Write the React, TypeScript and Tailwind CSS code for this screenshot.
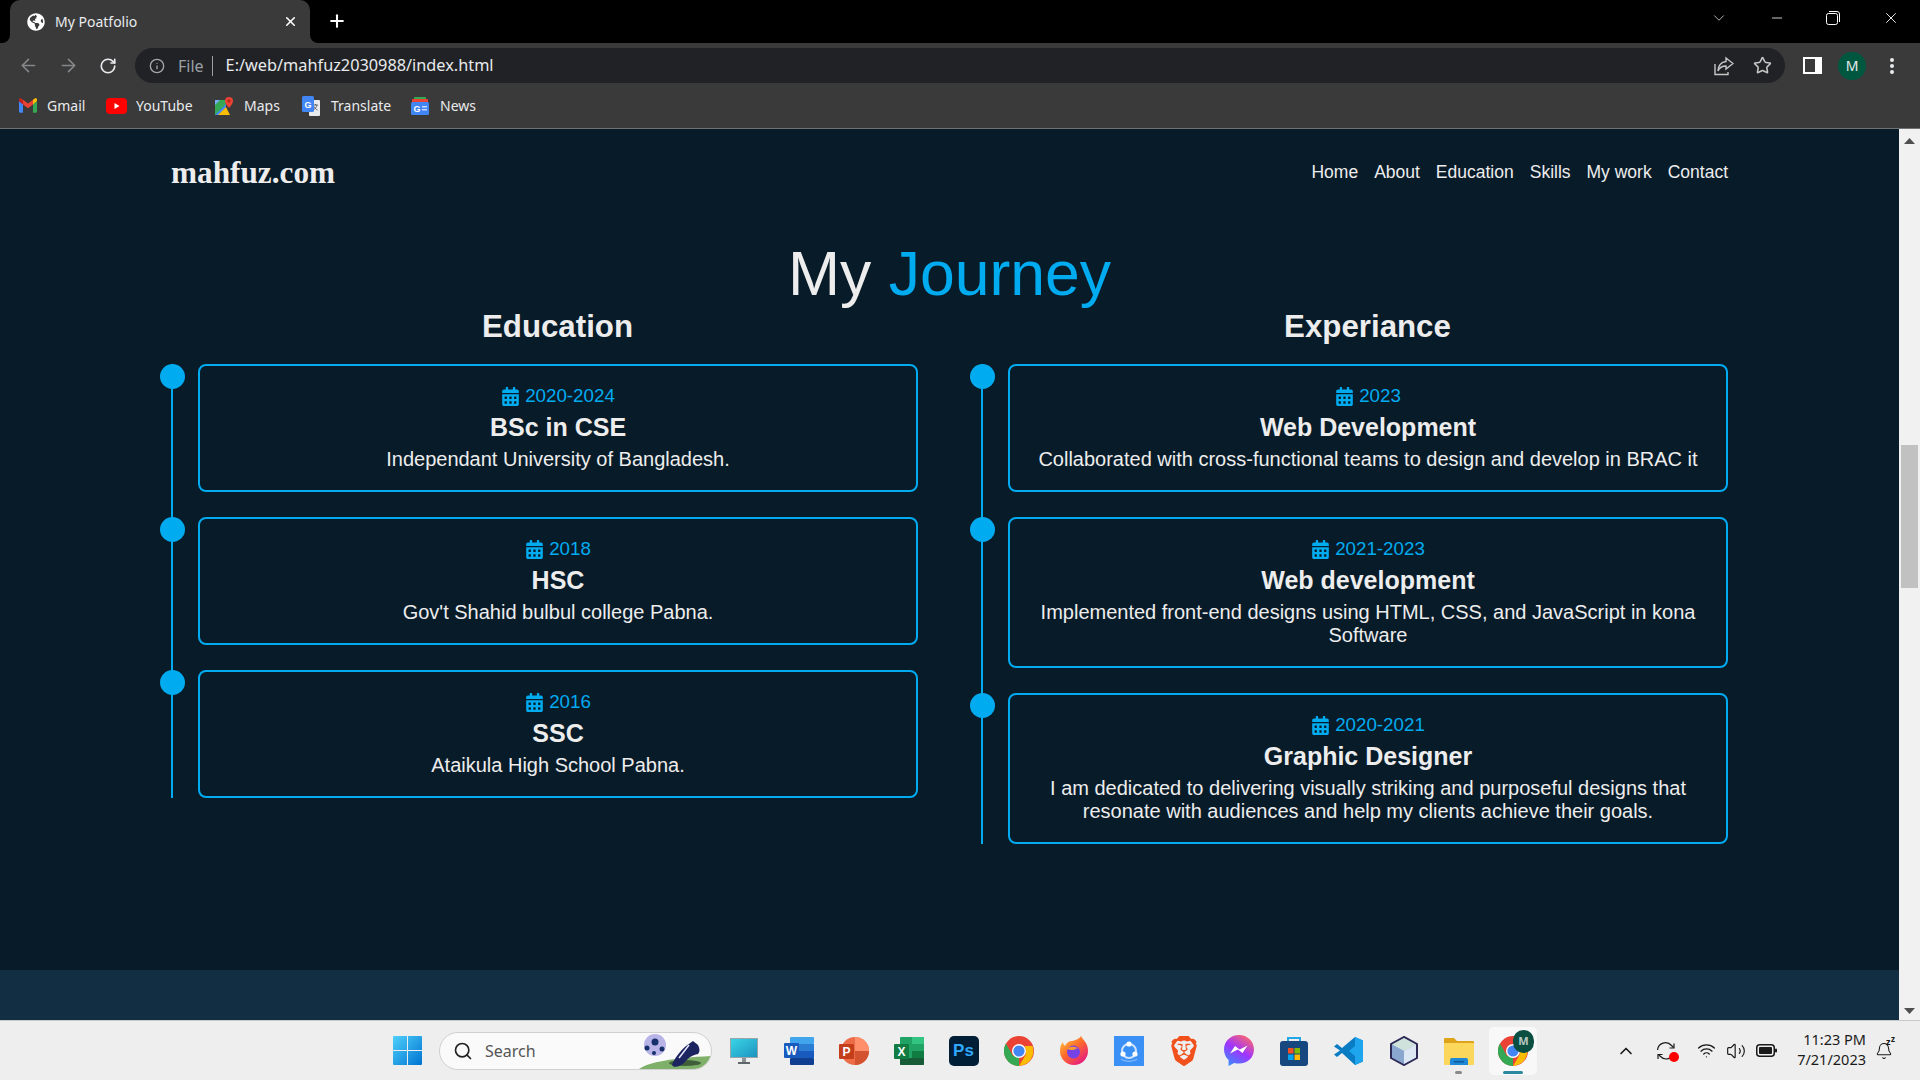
import type { ReactNode } from 'react';
import { ArrowLeft, ArrowRight, Bell, ChevronDown, ChevronUp, Info, Minus, Plus, RotateCw, Search, Star, Volume2, Wifi, X } from 'lucide-react';
import { FaCalendarAlt, FaGlobeAmericas } from 'react-icons/fa';
import { SiBrave } from 'react-icons/si';

type TimelineItem = { date: string; title: string; text: string };

const education: TimelineItem[] = [
  { date: '2020-2024', title: 'BSc in CSE', text: 'Independant University of Bangladesh.' },
  { date: '2018', title: 'HSC', text: "Gov't Shahid bulbul college Pabna." },
  { date: '2016', title: 'SSC', text: 'Ataikula High School Pabna.' },
];

const experience: TimelineItem[] = [
  { date: '2023', title: 'Web Development', text: 'Collaborated with cross-functional teams to design and develop in BRAC it' },
  { date: '2021-2023', title: 'Web development', text: 'Implemented front-end designs using HTML, CSS, and JavaScript in kona Software' },
  { date: '2020-2021', title: 'Graphic Designer', text: 'I am dedicated to delivering visually striking and purposeful designs that resonate with audiences and help my clients achieve their goals.' },
];

const navLinks = ['Home', 'About', 'Education', 'Skills', 'My work', 'Contact'];

function GmailIcon() {
  return (
    <svg width="18" height="15" viewBox="0 0 18 15">
      <path d="M0 3v10.500a1.300 1.300 0 0 0 1.300 1.300H4V6.500z" fill="#4285f4" />
      <path d="M14 6.500v8.300h2.700a1.300 1.300 0 0 0 1.300-1.300V3z" fill="#34a853" />
      <path d="M4 6.500 9 10.200l5-3.700V1.800L9 5.500 4 1.800z" fill="#ea4335" />
      <path d="M0 3l4 3.500V1.800L2.300.4A1.400 1.400 0 0 0 0 1.500z" fill="#c5221f" />
      <path d="M14 1.800v4.700L18 3V1.500A1.400 1.400 0 0 0 15.700.4z" fill="#fbbc04" />
    </svg>
  );
}

function YoutubeIcon() {
  return (
    <svg width="21" height="16" viewBox="0 0 21 16">
      <rect width="21" height="16" rx="4" fill="#f00" />
      <path d="M8.500 5v6l5-3z" fill="#fff" />
    </svg>
  );
}

function MapsIcon() {
  return (
    <svg width="18" height="18" viewBox="0 0 18 18">
      <path d="M0 3h11v15H0z" fill="#34a853" />
      <path d="M0 18 11 7v11z" fill="#4285f4" />
      <path d="M0 3h5L0 8z" fill="#7baaf7" />
      <path d="M3 18l8-8 4 8z" fill="#fbbc04" />
      <path d="M14 0a4 4 0 0 0-4 4c0 3 4 7 4 7s4-4 4-7a4 4 0 0 0-4-4z" fill="#ea4335" />
      <circle cx="14" cy="4" r="1.400" fill="#a52714" />
    </svg>
  );
}

function TranslateIcon() {
  return (
    <svg width="18" height="20" viewBox="0 0 18 20">
      <rect x="7" y="4" width="11" height="16" rx="1" fill="#e8eaed" />
      <path d="M11 9h5M13.500 8v1M15 9c-.5 2-2 4-3.500 5M12 10.500c.8 1.500 2 3 3.500 3.500" stroke="#5f6368" strokeWidth="1" fill="none" />
      <rect width="12" height="16" rx="1.500" fill="#4285f4" />
      <text x="6" y="11.500" textAnchor="middle" fontSize="9" fontWeight="700" fill="#fff" fontFamily="Liberation Sans">G</text>
    </svg>
  );
}

function NewsIcon() {
  return (
    <svg width="18" height="18" viewBox="0 0 18 18">
      <rect x="3" y="0" width="12" height="6" rx="1" fill="#34a853" />
      <rect x="1" y="2" width="16" height="5" rx="1" fill="#ea4335" />
      <rect x="0" y="5" width="18" height="13" rx="1.500" fill="#4285f4" />
      <text x="6" y="15" textAnchor="middle" fontSize="9" fontWeight="700" fill="#fff" fontFamily="Liberation Sans">G</text>
      <path d="M11 9h5v1.500h-5zM11 12h5v1.500h-5z" fill="#c6dafc" />
    </svg>
  );
}

function ChromeLogo() {
  return (
    <svg width="30" height="30" viewBox="0 0 30 30">
      <circle cx="15" cy="15" r="15" fill="#ea4335" />
      <path d="M15 30a15 15 0 0 1-13-22.500L9 20l6 0z" fill="#34a853" />
      <path d="M15 30 22 18l-1-8h7.500A15 15 0 0 1 15 30z" fill="#fbbc04" />
      <circle cx="15" cy="15" r="7" fill="#fff" />
      <circle cx="15" cy="15" r="5.600" fill="#4285f4" />
    </svg>
  );
}

function MonitorIcon() {
  return (
    <svg width="28" height="28" viewBox="0 0 28 28">
      <defs>
        <linearGradient id="mon" x1="0" y1="0" x2="1" y2="1">
          <stop offset="0" stopColor="#3ad5e6" />
          <stop offset="1" stopColor="#1c93c0" />
        </linearGradient>
      </defs>
      <rect x="0" y="1" width="28" height="20" fill="#9aa4ab" />
      <rect x="1" y="2" width="26" height="18" fill="url(#mon)" />
      <rect x="12" y="21" width="4" height="4" fill="#8a9298" />
      <rect x="8" y="25" width="12" height="2" fill="#5f666b" />
    </svg>
  );
}

function WordIcon() {
  return (
    <svg width="30" height="30" viewBox="0 0 30 30">
      <rect x="6" y="1" width="24" height="7" rx="1" fill="#41a5ee" />
      <rect x="6" y="8" width="24" height="7" fill="#2b7cd3" />
      <rect x="6" y="15" width="24" height="7" fill="#185abd" />
      <rect x="6" y="22" width="24" height="7" rx="1" fill="#103f91" />
      <rect x="0" y="7" width="15" height="15" rx="1" fill="#185abd" />
      <text x="7.500" y="19" textAnchor="middle" fontSize="12" fontWeight="700" fill="#fff" fontFamily="Liberation Sans">W</text>
    </svg>
  );
}

function PowerPointIcon() {
  return (
    <svg width="30" height="30" viewBox="0 0 30 30">
      <circle cx="16" cy="15" r="14" fill="#ed6c47" />
      <path d="M16 1a14 14 0 0 1 14 14H16z" fill="#ff8f6b" />
      <path d="M16 15h14a14 14 0 0 1-14 14z" fill="#d35230" />
      <rect x="0" y="8" width="15" height="15" rx="1" fill="#c43e1c" />
      <text x="7.500" y="20" textAnchor="middle" fontSize="12" fontWeight="700" fill="#fff" fontFamily="Liberation Sans">P</text>
    </svg>
  );
}

function ExcelIcon() {
  return (
    <svg width="30" height="30" viewBox="0 0 30 30">
      <rect x="6" y="1" width="24" height="28" rx="1" fill="#21a366" />
      <rect x="18" y="1" width="12" height="7" rx="1" fill="#33c481" />
      <rect x="18" y="15" width="12" height="7" fill="#107c41" />
      <rect x="6" y="22" width="24" height="7" rx="1" fill="#185c37" />
      <rect x="0" y="8" width="15" height="15" rx="1" fill="#107c41" />
      <text x="7.500" y="20" textAnchor="middle" fontSize="12" fontWeight="700" fill="#fff" fontFamily="Liberation Sans">X</text>
    </svg>
  );
}

function FirefoxIcon() {
  return (
    <svg width="30" height="30" viewBox="0 0 30 30">
      <defs>
        <linearGradient id="ff" x1="0" y1="0" x2="0.8" y2="1">
          <stop offset="0" stopColor="#ffd03a" />
          <stop offset="0.5" stopColor="#ff6a2b" />
          <stop offset="1" stopColor="#e31587" />
        </linearGradient>
      </defs>
      <path d="M22 0c2 4 7 7 7 15a14 14 0 0 1-28 0c0-4 1-7 3-9 0 2 1 3 2 4 1-3 4-5 7-5 4-1 7-2 9-5z" fill="url(#ff)" />
      <circle cx="14.500" cy="16" r="6.500" fill="#7542e5" />
      <path d="M8 13c3-3 8-3 12 0-2-1-4 0-5 1-2 0-4 0-7-1z" fill="#ff9a2e" />
    </svg>
  );
}

function ShareitIcon() {
  return (
    <svg width="30" height="30" viewBox="0 0 30 30">
      <rect width="30" height="30" fill="#3a90f4" />
      <circle cx="15" cy="15" r="7" fill="none" stroke="#cfe3fc" strokeWidth="2" />
      <circle cx="15" cy="8" r="2.600" fill="#fff" />
      <circle cx="9" cy="18" r="2.600" fill="#fff" />
      <circle cx="21" cy="18" r="2.600" fill="#fff" />
      <path d="M7 23c4 3 12 3 16 0" fill="none" stroke="#9cc6f9" strokeWidth="1" />
    </svg>
  );
}

function MessengerIcon() {
  return (
    <svg width="30" height="31" viewBox="0 0 30 31">
      <defs>
        <linearGradient id="msg" x1="0.2" y1="1" x2="0.8" y2="0">
          <stop offset="0" stopColor="#3a8cff" />
          <stop offset="0.5" stopColor="#a033ff" />
          <stop offset="1" stopColor="#ff6968" />
        </linearGradient>
      </defs>
      <path d="M15 0C6.500 0 0 6.200 0 14.500c0 4.300 1.800 8 4.600 10.600V31l5.500-3c1.500.4 3.100.6 4.900.6 8.500 0 15-6.300 15-14.100C30 6.200 23.500 0 15 0z" fill="url(#msg)" />
      <path d="M6 18.500 11 11l4.600 3.600L23.500 10.500l-5 7.500-4.600-3.600z" fill="#fff" />
    </svg>
  );
}

function StoreIcon() {
  return (
    <svg width="30" height="30" viewBox="0 0 30 30">
      <path d="M9 6V2h12v4" fill="none" stroke="#22a7e8" strokeWidth="2" />
      <rect x="1" y="5" width="28" height="25" rx="3" fill="#17477f" />
      <rect x="9" y="12" width="5.500" height="5.500" fill="#f25022" />
      <rect x="15.500" y="12" width="5.500" height="5.500" fill="#7fba00" />
      <rect x="9" y="18.500" width="5.500" height="5.500" fill="#00a4ef" />
      <rect x="15.500" y="18.500" width="5.500" height="5.500" fill="#ffb900" />
    </svg>
  );
}

function VsCodeIcon() {
  return (
    <svg width="30" height="30" viewBox="0 0 30 30">
      <path d="M21 1 29 4.500v21L21 29 8 17l-5 4-3-2.500 6-4-6-4L3 8l5 4z" fill="#0a7cc4" />
      <path d="M21 1l8 3.500v21L21 29V20l-6-5 6-5z" fill="#1fa5ee" />
    </svg>
  );
}

function CubeIcon() {
  return (
    <svg width="28" height="30" viewBox="0 0 28 30">
      <path d="M14 1 27 8v14L14 29 1 22V8z" fill="#9db8d8" stroke="#2d2a55" strokeWidth="2" />
      <path d="M14 2 26 8.500 14 15 2 8.500z" fill="#cfe3dc" />
      <path d="M14 15v13L2 21.500v-13z" fill="#8aa7cf" />
      <path d="M14 15v13l12-6.500v-13z" fill="#dde6f3" />
    </svg>
  );
}

function FolderIcon() {
  return (
    <svg width="30" height="28" viewBox="0 0 30 28">
      <path d="M0 2a1 1 0 0 1 1-1h9l3 3h16a1 1 0 0 1 1 1v4H0z" fill="#dfa31a" />
      <rect y="6" width="30" height="22" rx="1" fill="#fbd75b" />
      <path d="M6 28v-5a2 2 0 0 1 2-2h14a2 2 0 0 1 2 2v5z" fill="#1e88d6" />
      <rect x="10" y="24" width="10" height="1.500" fill="#0d5a9a" />
    </svg>
  );
}

function WindowsLogo() {
  return (
    <svg width="29" height="29" viewBox="0 0 29 29">
      <defs>
        <linearGradient id="win" x1="0" y1="0" x2="1" y2="1">
          <stop offset="0" stopColor="#4fd0fb" />
          <stop offset="1" stopColor="#0073d1" />
        </linearGradient>
      </defs>
      <path d="M0 1a1 1 0 0 1 1-1h13v14H0zM15 0h13a1 1 0 0 1 1 1v13H15zM0 15h14v14H1a1 1 0 0 1-1-1zM15 15h14v13a1 1 0 0 1-1 1H15z" fill="url(#win)" />
    </svg>
  );
}

function SearchArt() {
  return (
    <svg width="72" height="36" viewBox="0 0 72 36">
      <path d="M0 36c10-7 34-11 72-13 0 6-4 13-12 13z" fill="#7fb069" />
      <ellipse cx="46" cy="30" rx="16" ry="3" fill="#3f5f3a" />
      <circle cx="16" cy="12" r="11" fill="#b9b4e8" />
      <circle cx="16" cy="9" r="3.500" fill="#17306b" />
      <circle cx="8" cy="15" r="2.500" fill="#17306b" />
      <circle cx="23" cy="16" r="2.500" fill="#17306b" />
      <circle cx="15" cy="20" r="2" fill="#17306b" />
      <path d="M33 32c2-6 8-14 14-19l7-5 5 4c2 4 2 7 0 9-6 1-10 4-14 9-4 4-11 5-12 2z" fill="#1d2560" />
      <path d="M40 25 50 12" stroke="#e8e8ff" strokeWidth="1.500" />
    </svg>
  );
}

function BatteryIcon() {
  return (
    <svg width="21" height="13" viewBox="0 0 21 13">
      <rect x=".75" y=".75" width="17.500" height="11.500" rx="3" fill="none" stroke="#1a1a1a" strokeWidth="1.500" />
      <rect x="3" y="3" width="13" height="7" rx="1" fill="#1a1a1a" />
      <rect x="19" y="4.500" width="2" height="4" rx="1" fill="#1a1a1a" />
    </svg>
  );
}

function SyncIcon() {
  return (
    <svg width="20" height="20" viewBox="0 0 20 20" fill="none" stroke="#1a1a1a" strokeWidth="1.200">
      <path d="M1.500 9a8 8 0 0 1 14-4.500l2 2" />
      <path d="M18 2.500v4.500h-4.500" />
      <path d="M18 12a8 8 0 0 1-13.500 3.500l-2-2" />
      <path d="M2 18v-4.500h4.500" />
    </svg>
  );
}

function ChromeShareIcon() {
  return (
    <svg width="20" height="20" viewBox="0 0 20 20" fill="none" stroke="#c4c7c5" strokeWidth="1.400">
      <path d="M1 8v10.500h13V16" />
      <path d="M12 2l7 5.500-7 5.500V10C8 10 5.500 11.500 4 15c0-5 3-9 8-9.500z" />
    </svg>
  );
}

function BookmarkLink({ icon, label, className }: { icon: ReactNode; label: string; className: string }) {
  return (
    <div className={`flex items-center ${className}`}>
      {icon}
      <span className="text-[14px] text-[#e8eaed]">{label}</span>
    </div>
  );
}

function BrowserChrome() {
  return (
    <div className="font-['Noto_Sans',sans-serif] shrink-0">
      {/* Tab strip */}
      <div className="h-[43px] bg-black flex items-end">
        <div className="relative ml-[10px] w-[300px] h-[43px] bg-[#3a3a3a] rounded-t-[10px] flex items-center pl-[17px]">
          <svg className="absolute left-[-8px] bottom-0" width="8" height="8" viewBox="0 0 8 8"><path d="M8 0v8H0a8 8 0 0 0 8-8z" fill="#3a3a3a" /></svg>
          <svg className="absolute right-[-8px] bottom-0" width="8" height="8" viewBox="0 0 8 8"><path d="M0 0v8h8a8 8 0 0 1-8-8z" fill="#3a3a3a" /></svg>
          <FaGlobeAmericas size={18} color="#fff" />
          <span className="ml-[10px] text-[14px] text-[#e8eaed]">My Poatfolio</span>
          <X size={15} color="#fff" strokeWidth={2.5} className="absolute right-[12px] top-[14px]" />
        </div>
        <Plus size={20} color="#fff" strokeWidth={2.5} className="ml-[17px] mb-[12px]" />
        <div className="ml-auto flex items-center h-[36px] self-start">
          <ChevronDown size={18} color="#c8c8c8" strokeWidth={1.2} className="mr-[41px]" />
          <Minus size={16} color="#fff" strokeWidth={1.2} className="mr-[41px]" />
          <svg className="mr-[42px]" width="14" height="14" viewBox="0 0 14 14" fill="none" stroke="#fff" strokeWidth="1"><rect x=".5" y="2.500" width="11" height="11" rx="2" /><path d="M3 .5h8a2.500 2.500 0 0 1 2.500 2.500v8" /></svg>
          <X size={18} color="#fff" strokeWidth={1.2} className="mr-[20px]" />
        </div>
      </div>
      {/* Toolbar */}
      <div className="h-[42px] bg-[#3a3a3a] flex items-center pt-[3px] pl-[8px] pr-[8px]">
        <div className="w-[40px] flex justify-center"><ArrowLeft size={21} color="#85888a" strokeWidth={1.8} /></div>
        <div className="w-[40px] flex justify-center"><ArrowRight size={21} color="#85888a" strokeWidth={1.8} /></div>
        <div className="w-[40px] flex justify-center"><RotateCw size={18} color="#e8eaed" strokeWidth={2.2} /></div>
        <div className="ml-[7px] flex-1 h-[35px] rounded-full bg-[#212225] flex items-center pl-[14px] pr-[13px]">
          <Info size={16} color="#a5a7a9" strokeWidth={2} />
          <span className="ml-[13px] text-[16px] text-[#9aa0a6]">File</span>
          <span className="ml-[8px] w-px h-[20px] bg-[#9aa0a6]" />
          <span className="ml-[13px] text-[16.300px] text-[#e8eaed]">E:/web/mahfuz2030988/index.html</span>
          <div className="ml-auto flex items-center gap-[19px]">
            <ChromeShareIcon />
            <Star size={19} color="#c4c7c5" strokeWidth={2} />
          </div>
        </div>
        <div className="ml-[7px] w-[40px] flex justify-center">
          <svg width="19" height="17" viewBox="0 0 19 17"><rect width="19" height="17" fill="#fff" /><rect x="2" y="2" width="10" height="13" fill="#3a3a3a" /></svg>
        </div>
        <div className="w-[40px] flex justify-center">
          <div className="w-[28px] h-[28px] rounded-full bg-[#00573f] flex items-center justify-center text-[14px] text-[#e8eaed]">M</div>
        </div>
        <div className="w-[40px] flex justify-center">
          <svg width="6" height="18" viewBox="0 0 6 18" fill="#e8eaed"><circle cx="3" cy="3" r="2" /><circle cx="3" cy="9" r="2" /><circle cx="3" cy="15" r="2" /></svg>
        </div>
      </div>
      {/* Bookmarks bar */}
      <div className="h-[44px] bg-[#3a3a3a] border-b border-[#6f7275] flex items-center pb-[2px] pl-[19px]">
        <BookmarkLink icon={<GmailIcon />} label="Gmail" className="gap-[10px] w-[85px]" />
        <BookmarkLink icon={<YoutubeIcon />} label="YouTube" className="gap-[9px] w-[109px] ml-[2px]" />
        <BookmarkLink icon={<MapsIcon />} label="Maps" className="gap-[11px] w-[87px]" />
        <BookmarkLink icon={<TranslateIcon />} label="Translate" className="gap-[11px] w-[109px]" />
        <BookmarkLink icon={<NewsIcon />} label="News" className="gap-[11px]" />
      </div>
    </div>
  );
}

function TimelineCard({ item, last }: { item: TimelineItem; last: boolean }) {
  return (
    <div className={`relative pl-[25px] ${last ? '' : 'pb-[25px]'}`}>
      <span className="absolute left-[-13.500px] top-0 w-[25px] h-[25px] rounded-full bg-[#00abf0]" />
      <div className="border-2 border-[#00abf0] rounded-[8px] px-[20px] pt-[19px] pb-[19px] text-center">
        <div className="h-[22px] leading-[22px] text-[18.750px] text-[#00abf0] flex items-center justify-center gap-[5px]">
          <FaCalendarAlt size={19} />
          {item.date}
        </div>
        <h4 className="mt-[6px] leading-[29px] text-[25px] font-bold">{item.title}</h4>
        <p className="mt-[6px] leading-[23px] text-[20px]">{item.text}</p>
      </div>
    </div>
  );
}

function TimelineColumn({ heading, items }: { heading: string; items: TimelineItem[] }) {
  return (
    <div>
      <h3 className="pl-[26px] text-center text-[31.250px] leading-[36px] font-bold mb-[19px]">{heading}</h3>
      <div className="border-l-2 border-[#00abf0]">
        {items.map((item, i) => (
          <TimelineCard key={item.title} item={item} last={i === items.length - 1} />
        ))}
      </div>
    </div>
  );
}

function Scrollbar() {
  return (
    <div className="w-[21px] shrink-0 bg-[#f1f1f1] flex flex-col items-center pt-[9px] pb-[6px]">
      <svg width="11" height="6" viewBox="0 0 11 6"><path d="M5.500 0 11 6H0z" fill="#505050" /></svg>
      <div className="mt-[301px] w-[17px] h-[143px] bg-[#c1c1c1]" />
      <svg className="mt-auto" width="11" height="6" viewBox="0 0 11 6"><path d="M5.500 6 11 0H0z" fill="#505050" /></svg>
    </div>
  );
}

function Taskbar() {
  const apps: ReactNode[] = [
    <MonitorIcon />,
    <WordIcon />,
    <PowerPointIcon />,
    <ExcelIcon />,
    <div className="w-[30px] h-[30px] rounded-[5px] bg-[#001e36] flex items-center justify-center"><span className="font-['Liberation_Sans',sans-serif] font-bold text-[17px] text-[#31a8ff]">Ps</span></div>,
    <ChromeLogo />,
    <FirefoxIcon />,
    <ShareitIcon />,
    <SiBrave size={30} color="#f1501c" />,
    <MessengerIcon />,
    <StoreIcon />,
    <VsCodeIcon />,
    <CubeIcon />,
    <FolderIcon />,
  ];

  return (
    <div className="h-[60px] shrink-0 bg-[#eeeeee] border-t border-[#c9c9c9] flex items-center pl-[380px] font-['Noto_Sans',sans-serif] text-[#1a1a1a]">
      <div className="w-[55px] flex justify-center"><WindowsLogo /></div>
      <div className="ml-[4px] w-[273px] h-[38px] rounded-full bg-[#fafafa] border border-[#d0d0d0] flex items-center pl-[13px] overflow-hidden">
        <Search size={20} color="#222" strokeWidth={2} />
        <span className="ml-[12px] text-[16px] text-[#555]">Search</span>
        <div className="ml-auto"><SearchArt /></div>
      </div>
      <div className="ml-[4px] flex">
        {apps.map((icon, i) => (
          <div key={i} className="relative w-[55px] h-[48px] flex items-center justify-center">
            {icon}
            {i === 13 && <span className="absolute bottom-[1px] left-[24px] w-[7px] h-[3px] rounded-full bg-[#8a8a8a]" />}
          </div>
        ))}
        <div className="relative w-[48px] h-[48px] ml-[3px] mr-[4px] rounded-[5px] bg-[#f8f8f8] flex items-center justify-center">
          <ChromeLogo />
          <span className="absolute right-[3px] top-[3px] w-[21px] h-[23px] rounded-full bg-[#0b4f42] flex items-center justify-center text-[11px] font-bold text-[#b9c9c4]">M</span>
          <span className="absolute bottom-[1px] left-[14px] w-[20px] h-[3px] rounded-full bg-[#2d8a9e]" />
        </div>
      </div>
      <div className="ml-[73px] w-[24px] flex justify-center"><ChevronUp size={20} strokeWidth={2} /></div>
      <div className="relative ml-[14px] w-[28px] flex justify-center">
        <SyncIcon />
        <span className="absolute right-[1px] bottom-[-1px] w-[10px] h-[10px] rounded-full bg-[#ff0000]" />
      </div>
      <div className="ml-[14px] w-[24px] flex justify-center"><Wifi size={19} strokeWidth={1.6} /></div>
      <div className="ml-[6px] w-[24px] flex justify-center"><Volume2 size={20} strokeWidth={1.4} /></div>
      <div className="ml-[6px] w-[24px] flex justify-center"><BatteryIcon /></div>
      <div className="ml-[8px] w-[80px] pb-[3px] text-right text-[14.500px] leading-[20px]">
        <div>11:23 PM</div>
        <div>7/21/2023</div>
      </div>
      <div className="relative ml-[6px] w-[24px] flex justify-center">
        <Bell size={18} strokeWidth={1.4} />
        <span className="absolute left-[14px] top-[-5px] text-[9px] leading-[10px] font-bold">z</span>
        <span className="absolute left-[19px] top-[-8px] text-[8px] leading-[10px] font-bold">z</span>
      </div>
    </div>
  );
}

export default function App() {
  return (
    <div className="w-full h-screen overflow-hidden flex flex-col">
      <BrowserChrome />
      <div className="flex-1 min-h-0 flex">
        <div className="flex-1 min-w-0 flex flex-col bg-[#081b29] font-['Liberation_Sans',sans-serif] text-[#ededed]">
          <div className="flex-1 pl-[171px] pr-[171px]">
            <header className="h-[88px] flex items-center justify-between">
              <div className="font-['Liberation_Serif',serif] font-bold text-[31.250px]">mahfuz.com</div>
              <nav className="flex gap-[16px] pb-[2px] text-[17.500px]">
                {navLinks.map((link) => (
                  <a key={link}>{link}</a>
                ))}
              </nav>
            </header>
            <h2 className="mt-[20px] text-center text-[62.500px] leading-[72px]">
              My <span className="text-[#00abf0]">Journey</span>
            </h2>
            <div className="grid grid-cols-2 gap-x-[63px] items-start">
              <TimelineColumn heading="Education" items={education} />
              <TimelineColumn heading="Experiance" items={experience} />
            </div>
          </div>
          <div className="h-[50px] bg-[#112e42]" />
        </div>
        <Scrollbar />
      </div>
      <Taskbar />
    </div>
  );
}
